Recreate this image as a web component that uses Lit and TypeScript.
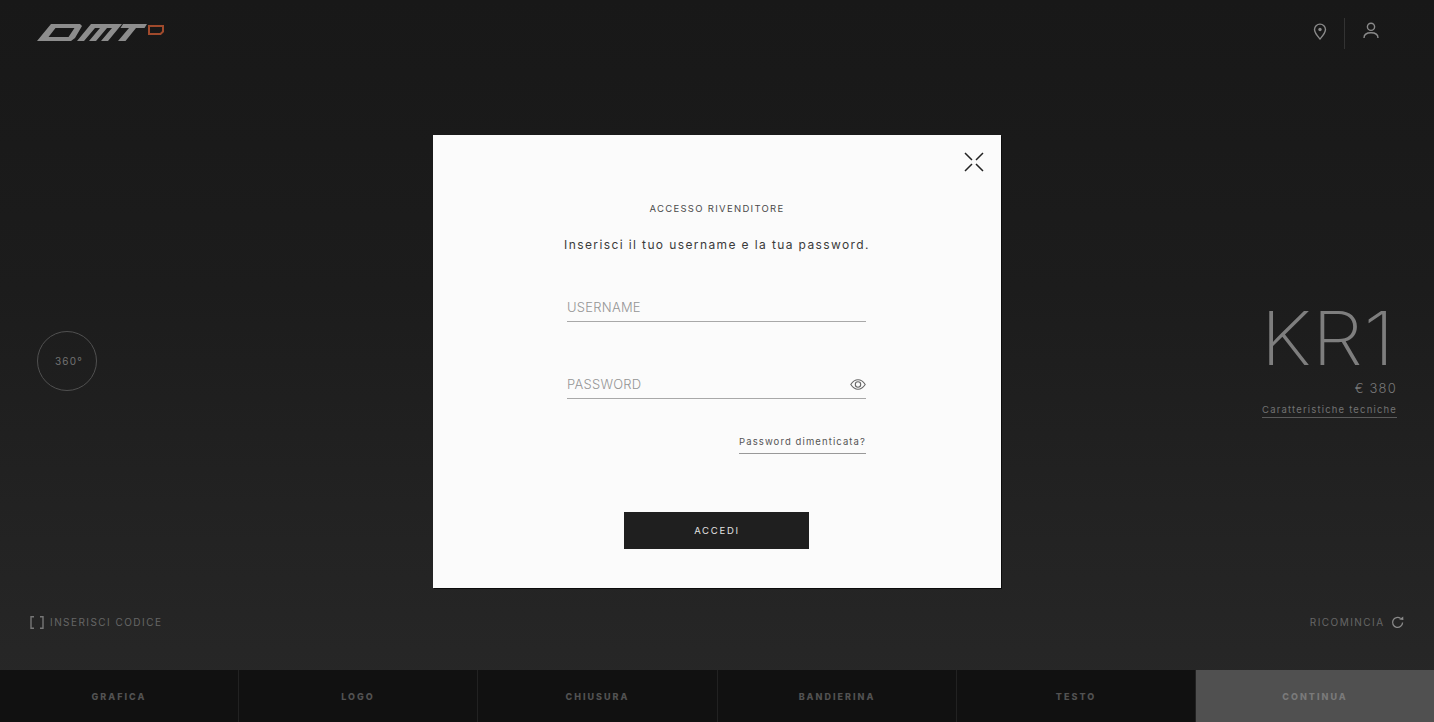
import { LitElement, html, css, svg } from "lit";
import { customElement } from "lit/decorators.js";

const NAV = ["GRAFICA", "LOGO", "CHIUSURA", "BANDIERINA", "TESTO"];

@customElement("app-root")
export class AppRoot extends LitElement {
  static styles = css`
    :host { display: block; position: relative; width: 100%; height: 100vh; overflow: hidden; font-family: Inter, "Liberation Sans", sans-serif; font-weight: 300; }
    .page { display: flex; flex-direction: column; height: 100%; background: linear-gradient(180deg, #181818 0%, #1c1c1c 40%, #282828 100%); color: #7f7f7f; }
    header { display: flex; justify-content: space-between; align-items: flex-start; height: 62px; padding: 0 55px 0 36px; }
    .logo { width: 130px; height: 20px; margin-top: 23px; }
    .hicons { display: flex; align-items: center; margin-top: 18px; }
    .hicons svg { display: block; }
    .pin { width: 14px; height: 17px; margin-right: 17px; margin-top: -5px; }
    .sep { width: 1px; height: 31px; background: #333; margin-right: 18px; }
    .user { width: 16px; height: 17px; margin-top: -6px; }
    .stage { flex: 1; display: flex; justify-content: space-between; align-items: flex-start; padding: 0 37px; }
    .circle { width: 58px; height: 58px; margin-top: 269px; border: 1.5px solid #505050; border-radius: 50%; display: flex; align-items: center; justify-content: center; font-size: 10px; letter-spacing: 1.2px; text-indent: 4px; color: #727272; font-weight: 400; }
    .product { margin-top: 234px; display: flex; flex-direction: column; align-items: flex-end; }
    .kr { font-size: 74px; line-height: 84px; font-weight: 250; color: #7e7e7e; letter-spacing: 0.5px; margin-right: 2px; transform: scaleX(1.1); transform-origin: right center; }
    .price { font-size: 13px; line-height: 16px; letter-spacing: 1.2px; color: #787878; }
    .spec { font-size: 9.5px; line-height: 14px; letter-spacing: 1.17px; color: #727272; margin-top: 7px; border-bottom: 1px solid #5a5a5a; font-weight: 400; }
    .tools { display: flex; justify-content: space-between; padding: 0 30px 40px; font-size: 10px; line-height: 16px; letter-spacing: 1.45px; color: #666; font-weight: 400; }
    .tool { display: flex; align-items: center; }
    .bracket { width: 14px; height: 13px; margin-right: 6px; display: block; }
    .reload { width: 13px; height: 13px; margin-left: 6.5px; display: block; }
    nav { display: grid; grid-template-columns: 239px 239px 240px 239px 239px 1fr; height: 52px; background: #111; }
    nav div { display: flex; align-items: center; justify-content: center; border-right: 1px solid #222; font-size: 9px; font-weight: 800; letter-spacing: 2px; color: #525252; }
    nav div.go { background: #505050; border-right: 0; color: #7a7a7a; }
    .overlay { position: absolute; inset: 0; padding-top: 1px; display: flex; align-items: center; justify-content: center; }
    .modal { position: relative; box-sizing: border-box; width: 568px; height: 453px; background: #fbfbfb; display: flex; flex-direction: column; align-items: center; padding-top: 67px; color: #333; box-shadow: 1px 1px 0 #0c0c0c; }
    .close { position: absolute; top: 17px; right: 17px; width: 20px; height: 20px; display: block; }
    h1 { margin: 0; font-size: 9.5px; line-height: 14px; font-weight: 400; letter-spacing: 1.3px; color: #4a4a4a; }
    p { margin: 21px 0 0; font-size: 12px; line-height: 16px; font-weight: 400; letter-spacing: 1.39px; color: #3a3a3a; }
    .field { width: 299px; margin-right: 1px; box-sizing: border-box; margin-top: 45px; height: 24px; padding-top: 1px; border-bottom: 1px solid #a8a8a8; display: flex; justify-content: space-between; align-items: flex-start; font-size: 13px; line-height: 16px; letter-spacing: 0.25px; color: #959595; }
    .field + .field { margin-top: 53px; }
    .eye { width: 16px; height: 11px; display: block; margin-top: 3px; }
    .forgot { align-self: flex-end; margin: 36px 135px 0 0; font-size: 9.5px; line-height: 14px; letter-spacing: 1.1px; font-weight: 400; color: #555; padding-bottom: 4px; border-bottom: 1px solid #999; }
    button { margin-top: 58px; margin-right: 2px; width: 185px; height: 37px; border: 0; padding: 0 0 0 2px; background: #1f1f1f; color: #e2e2e2; font: 400 9.5px Inter, "Liberation Sans", sans-serif; letter-spacing: 1.75px; }
  `;

  render() {
    return html`
      <div class="page">
        <header>
          <svg class="logo" viewBox="36 23 130 20" role="img" aria-label="DMT ID">
            ${svg`<g fill="#8d8d8d">
              <path fill-rule="evenodd" d="M51 24H80L82 26L75 38L71 41H37ZM55.5 28L48.5 37H68.5L74.5 28Z"/>
              <path d="M77 41L91 24H122L108 41H101L112 28H107L96 41H89L100 28H95L84 41Z"/>
              <path d="M123 24H147L144.5 28H136L125.5 41H118L129 28H120.5Z"/>
            </g>
            <path fill="none" stroke="#a04a2c" stroke-width="2" d="M149 26H163V31.5L160.5 34H149Z"/>`}
          </svg>
          <div class="hicons">
            <svg class="pin" viewBox="0 0 14 17" fill="none" stroke="#8a8a8a" stroke-width="1.4">
              <path d="M7 16C4 12.6 1.5 10 1.5 6.6A5.5 5.5 0 0 1 12.5 6.6C12.5 10 10 12.6 7 16Z"/>
              <circle cx="7" cy="6.5" r="1.7" fill="#8a8a8a" stroke="none"/>
            </svg>
            <div class="sep"></div>
            <svg class="user" viewBox="0 0 16 17" fill="none" stroke="#8a8a8a" stroke-width="1.4">
              <circle cx="8" cy="4.8" r="3.6"/>
              <path d="M1 16C1 12.5 4 10.8 8 10.8S15 12.5 15 16"/>
            </svg>
          </div>
        </header>
        <div class="stage">
          <div class="circle">360°</div>
          <div class="product">
            <div class="kr">KR1</div>
            <div class="price">€ 380</div>
            <div class="spec">Caratteristiche tecniche</div>
          </div>
        </div>
        <div class="tools">
          <div class="tool">
            <svg class="bracket" viewBox="0 0 14 13" fill="none" stroke="#777" stroke-width="1.4"><path d="M4 .7H1V12.3H4M10 .7H13V12.3H10"/></svg>
            INSERISCI CODICE
          </div>
          <div class="tool">
            RICOMINCIA
            <svg class="reload" viewBox="0 0 13 13" fill="none" stroke="#8a8a8a" stroke-width="1.3"><path d="M9.6 2.4A5 5 0 1 0 11.6 6.5"/><path d="M8.2 3.4L12.4 4L12.2 .6Z" fill="#8a8a8a" stroke="none"/></svg>
          </div>
        </div>
        <nav>
          ${NAV.map((n) => html`<div>${n}</div>`)}
          <div class="go">CONTINUA</div>
        </nav>
      </div>
      <div class="overlay">
        <div class="modal">
          <svg class="close" viewBox="0 0 20 20" fill="none" stroke="#222" stroke-width="1.5"><path d="M1 1L8 8M19 1L12 8M1 19L8 12M19 19L12 12"/></svg>
          <h1>ACCESSO RIVENDITORE</h1>
          <p>Inserisci il tuo username e la tua password.</p>
          <div class="field">USERNAME</div>
          <div class="field">PASSWORD
            <svg class="eye" viewBox="0 0 16 11" fill="none" stroke="#666" stroke-width="1.1"><path d="M.8 5.5C3 2.2 5.4.8 8 .8S13 2.2 15.2 5.5C13 8.8 10.6 10.2 8 10.2S3 8.8.8 5.5Z"/><circle cx="8" cy="5.5" r="2.7"/></svg>
          </div>
          <div class="forgot">Password dimenticata?</div>
          <button>ACCEDI</button>
        </div>
      </div>
    `;
  }
}
